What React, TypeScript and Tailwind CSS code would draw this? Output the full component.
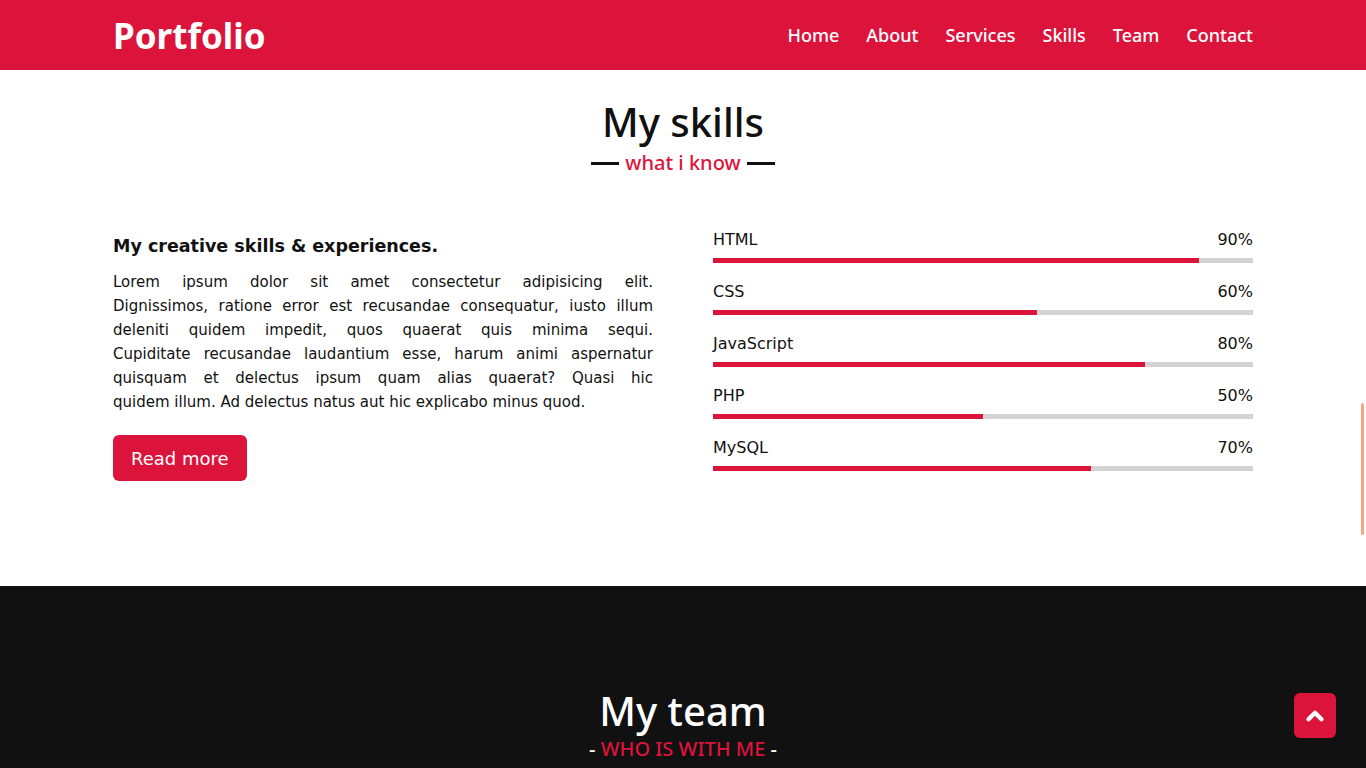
import { ChevronUp } from 'lucide-react';

const links = ['Home', 'About', 'Services', 'Skills', 'Team', 'Contact'];

const skills = [
    { name: 'HTML', value: 90 },
    { name: 'CSS', value: 60 },
    { name: 'JavaScript', value: 80 },
    { name: 'PHP', value: 50 },
    { name: 'MySQL', value: 70 },
];

// the paragraph is broken where the reference breaks it, each line justified
const lines = [
    'Lorem ipsum dolor sit amet consectetur adipisicing elit.',
    'Dignissimos, ratione error est recusandae consequatur, iusto illum',
    'deleniti quidem impedit, quos quaerat quis minima sequi.',
    'Cupiditate recusandae laudantium esse, harum animi aspernatur',
    'quisquam et delectus ipsum quam alias quaerat? Quasi hic',
];
const lastLine = 'quidem illum. Ad delectus natus aut hic explicabo minus quod.';

// heading font stands in for Ubuntu, body font for Poppins
const head = "font-['Noto_Sans',sans-serif]";
const body = "font-['DejaVu_Sans',sans-serif]";

function Navbar() {
    return (
        <nav className="h-[70px] bg-[#dc143c] shrink-0">
            <div className="mx-auto flex h-full w-[1140px] items-center justify-between">
                <a className={`${head} text-[35px] font-bold leading-none text-white`}>Portfolio</a>
                <ul className={`${head} flex gap-[27px] text-[18px] font-medium text-white`}>
                    {links.map((l) => (
                        <li key={l}>{l}</li>
                    ))}
                </ul>
            </div>
        </nav>
    );
}

function SkillBar({ name, value }: { name: string; value: number }) {
    return (
        <div>
            <div className={`${body} flex justify-between text-[16px] leading-[24px] text-[#111]`}>
                <span>{name}</span>
                <span>{value}%</span>
            </div>
            <div className="mt-[6px] h-[5px] bg-[#d3d3d3]">
                <div className="h-full bg-[#dc143c]" style={{ width: `${value}%` }} />
            </div>
        </div>
    );
}

function Skills() {
    return (
        <section className="shrink-0 bg-white pt-[28px] pb-[105px]">
            <div className="text-center">
                <h2 className={`${head} text-[40px] font-medium leading-[48px] text-[#111]`}>My skills</h2>
                <div className="mt-[5px] flex items-center justify-center gap-[6px]">
                    <span className="h-[3px] w-[28px] bg-[#111]" />
                    <span className={`${head} text-[20px] font-medium leading-[24px] text-[#dc143c]`}>what i know</span>
                    <span className="h-[3px] w-[28px] bg-[#111]" />
                </div>
            </div>
            <div className="mx-auto mt-[53px] grid w-[1140px] grid-cols-2 gap-[60px]">
                <div className={body}>
                    <h3 className="mt-[4px] text-[17.5px] font-semibold leading-[28px] text-[#111]">My creative skills &amp; experiences.</h3>
                    <p className="mt-[10px] text-[15px] leading-[24px] text-[#111]">
                        {lines.map((l) => (
                            <span key={l} className="block text-justify [text-align-last:justify]">{l}</span>
                        ))}
                        <span className="block">{lastLine}</span>
                    </p>
                    <button className="mt-[21px] h-[46px] rounded-[6px] bg-[#dc143c] px-[18px] text-[18px] text-white">Read more</button>
                </div>
                <div className="flex flex-col gap-[17px]">
                    {skills.map((s) => (
                        <SkillBar key={s.name} {...s} />
                    ))}
                </div>
            </div>
        </section>
    );
}

function Team() {
    return (
        <section className="flex-1 bg-[#111] pt-[101px]">
            <div className="text-center">
                <h2 className={`${head} text-[40px] font-medium leading-[48px] text-white`}>My team</h2>
                <div className={`${head} mt-[2px] text-[20px] font-medium leading-[24px] text-white`}>
                    - <span className="text-[#dc143c]">WHO IS WITH ME</span> -
                </div>
            </div>
        </section>
    );
}

export default function App() {
    return (
        <div className="relative flex h-screen flex-col overflow-hidden">
            <Navbar />
            <Skills />
            <Team />
            <div className="absolute right-[2px] top-[403px] h-[132px] w-[3px] rounded-full bg-[#f4a582]" />
            <button className="absolute bottom-[30px] right-[30px] flex h-[45px] w-[42px] items-center justify-center rounded-[6px] bg-[#dc143c] text-white">
                <ChevronUp size={26} strokeWidth={4} />
            </button>
        </div>
    );
}
